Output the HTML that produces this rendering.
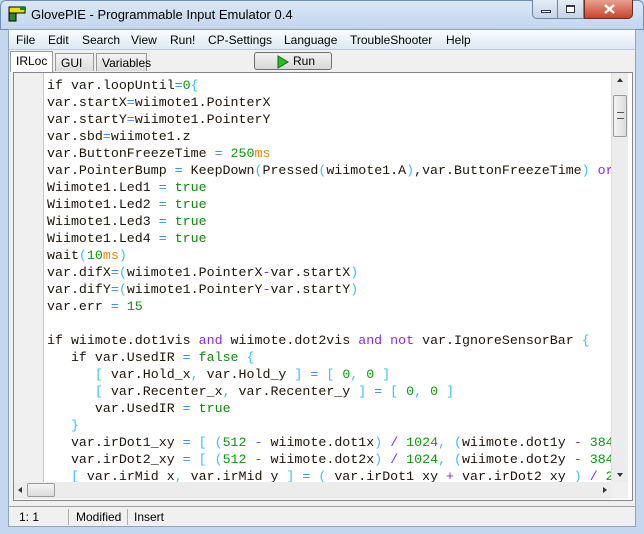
<!DOCTYPE html>
<html><head><style>
*{margin:0;padding:0;box-sizing:border-box}
body{width:644px;height:534px;overflow:hidden;background:#c4d7ee;font-family:"Liberation Sans",sans-serif;position:relative}
.abs{position:absolute}
#title{left:0;top:0;width:644px;height:30px;background:linear-gradient(#dbe8f7,#c2d6ee);border-radius:6px 6px 0 0;border:1px solid #6e8fb5}
#ttext{left:31px;top:7px;font-size:13px;color:#000}
#client{left:8px;top:29px;width:628px;height:498px;background:#f0f0f0;border:1px solid #8ea3bd}
#menu{left:9px;top:30px;width:626px;height:20px;background:linear-gradient(#fbfcfe,#dde7f4);font-size:12px;border-bottom:1px solid #b9c9de}
#menu span{position:absolute;top:3px}
.tab{position:absolute;font-size:12px;border:1px solid #999;border-bottom:none;background:linear-gradient(#f4f4f4,#dcdcdc);height:18px;top:53px;padding:2px 5px}
#editor{left:13px;top:72px;width:620px;height:429px;border:1px solid #828790;background:#fff}
#gutter{left:14px;top:73px;width:30px;height:409px;background:#f0f0f0;border-right:1px solid #c8c8c8}
#code{left:47px;top:77px;font-family:"Liberation Mono",monospace;font-size:13.3px;line-height:17px;white-space:pre;color:#1e1408;width:564px;height:405px;overflow:hidden}
.o{color:#3a8cf0}.n{color:#0a9a0a}.s{color:#f08a00}.k{color:#8a2be2}.b{color:#3cc0f0}.t{color:#0a8a0a}
#vs{left:611px;top:73px;width:17px;height:409px;background:#ececec;border-left:1px solid #e0e0e0}
#hs{left:14px;top:482px;width:597px;height:17px;background:#ececec}
#status{left:9px;top:506px;width:626px;height:20px;font-size:12px;border-top:1px solid #a0a0a0;background:#f0f0f0}
#status span{position:absolute;top:3px}
</style></head><body>
<div id="title" class="abs"></div>
<svg class="abs" style="left:8px;top:4px" width="20" height="20"><rect x="1" y="3" width="16" height="6" fill="#e8e000" stroke="#000"/><rect x="1" y="9" width="7" height="8" fill="#2a8a2a" stroke="#000"/><rect x="12" y="3" width="6" height="3" fill="#0a8a0a"/></svg>
<div id="ttext" class="abs">GlovePIE - Programmable Input Emulator 0.4</div>
<div class="abs" style="left:532px;top:0;width:26px;height:19px;border:1px solid #6d85a4;border-top:none;border-radius:0 0 0 5px;background:linear-gradient(#e4ecf6,#c4d4e8)"><div style="position:absolute;left:8px;top:10px;width:10px;height:3px;background:#fff;border:1px solid #334"></div></div>
<div class="abs" style="left:558px;top:0;width:26px;height:19px;border:1px solid #6d85a4;border-top:none;border-left:none;background:linear-gradient(#e4ecf6,#c4d4e8)"><div style="position:absolute;left:8px;top:5px;width:9px;height:8px;border:1px solid #334;border-top-width:2px;background:#fff"></div></div>
<div class="abs" style="left:584px;top:0;width:49px;height:19px;border:1px solid #6b2c24;border-top:none;border-radius:0 0 5px 0;background:linear-gradient(#e8a090,#c8442c)"><svg style="position:absolute;left:18px;top:4px" width="13" height="10"><path d="M2 1 L11 9 M11 1 L2 9" stroke="#fff" stroke-width="2.5"/></svg></div>
<div id="client" class="abs"></div>
<div id="menu" class="abs"><span style="left:7px">File</span><span style="left:39px">Edit</span><span style="left:73px">Search</span><span style="left:122px">View</span><span style="left:161px">Run!</span><span style="left:199px">CP-Settings</span><span style="left:275px">Language</span><span style="left:341px">TroubleShooter</span><span style="left:437px">Help</span></div>
<div class="tab" style="left:10px;top:51px;height:21px;background:#fff;padding-top:2px">IRLoc</div>
<div class="tab" style="left:55px;width:39px">GUI</div>
<div class="tab" style="left:96px;width:51px">Variables</div>
<div class="abs" style="left:254px;top:52px;width:78px;height:18px;border:1px solid #707070;border-radius:3px;background:linear-gradient(#f2f2f2,#d8d8d8);font-size:12px"><svg style="position:absolute;left:22px;top:2px" width="12" height="14"><path d="M1 1 L11 7 L1 13Z" fill="#22c022" stroke="#0a6a0a"/></svg><span style="position:absolute;left:38px;top:1px">Run</span></div>
<div id="editor" class="abs"></div>
<div id="gutter" class="abs"></div>
<div id="code" class="abs">if var.loopUntil<span class="o">=</span><span class="n">0</span><span class="b">{</span>
var.startX<span class="o">=</span>wiimote1.PointerX
var.startY<span class="o">=</span>wiimote1.PointerY
var.sbd<span class="o">=</span>wiimote1.z
var.ButtonFreezeTime <span class="o">=</span> <span class="n">250</span><span class="s">ms</span>
var.PointerBump <span class="o">=</span> KeepDown<span class="b">(</span>Pressed<span class="b">(</span>wiimote1.A<span class="b">)</span>,var.ButtonFreezeTime<span class="b">)</span> <span class="k">or</span>
Wiimote1.Led1 <span class="o">=</span> <span class="t">true</span>
Wiimote1.Led2 <span class="o">=</span> <span class="t">true</span>
Wiimote1.Led3 <span class="o">=</span> <span class="t">true</span>
Wiimote1.Led4 <span class="o">=</span> <span class="t">true</span>
wait<span class="b">(</span><span class="n">10</span><span class="s">ms</span><span class="b">)</span>
var.difX<span class="o">=</span><span class="b">(</span>wiimote1.PointerX<span class="k">-</span>var.startX<span class="b">)</span>
var.difY<span class="o">=</span><span class="b">(</span>wiimote1.PointerY<span class="k">-</span>var.startY<span class="b">)</span>
var.err <span class="o">=</span> <span class="n">15</span>

if wiimote.dot1vis <span class="k">and</span> wiimote.dot2vis <span class="k">and</span> <span class="k">not</span> var.IgnoreSensorBar <span class="b">{</span>
   if var.UsedIR <span class="o">=</span> <span class="t">false</span> <span class="b">{</span>
      <span class="b">[</span> var.Hold_x<span class="b">,</span> var.Hold_y <span class="b">]</span> <span class="o">=</span> <span class="b">[</span> <span class="n">0</span><span class="b">,</span> <span class="n">0</span> <span class="b">]</span>
      <span class="b">[</span> var.Recenter_x<span class="b">,</span> var.Recenter_y <span class="b">]</span> <span class="o">=</span> <span class="b">[</span> <span class="n">0</span><span class="b">,</span> <span class="n">0</span> <span class="b">]</span>
      var.UsedIR <span class="o">=</span> <span class="t">true</span>
   <span class="b">}</span>
   var.irDot1_xy <span class="o">=</span> <span class="b">[</span> <span class="b">(</span><span class="n">512</span> <span class="k">-</span> wiimote.dot1x<span class="b">)</span> <span class="k">/</span> <span class="n">1024</span><span class="b">,</span> <span class="b">(</span>wiimote.dot1y <span class="k">-</span> <span class="n">384</span>
   var.irDot2_xy <span class="o">=</span> <span class="b">[</span> <span class="b">(</span><span class="n">512</span> <span class="k">-</span> wiimote.dot2x<span class="b">)</span> <span class="k">/</span> <span class="n">1024</span><span class="b">,</span> <span class="b">(</span>wiimote.dot2y <span class="k">-</span> <span class="n">384</span>
   <span class="b">[</span> var.irMid x<span class="b">,</span> var.irMid y <span class="b">]</span> <span class="o">=</span> <span class="b">(</span> var.irDot1 xy <span class="k">+</span> var.irDot2 xy <span class="b">)</span> <span class="k">/</span> <span class="n">2</span></div>
<div id="vs" class="abs"><div style="position:absolute;left:5px;top:5px;border:3px solid transparent;border-bottom:4px solid #333;border-top:none"></div><div style="position:absolute;left:1px;top:22px;width:14px;height:42px;border:1px solid #9a9a9a;border-radius:2px;background:linear-gradient(90deg,#f4f4f4,#dcdcdc)"><div style="position:absolute;left:3px;top:16px;width:7px;height:7px;border-top:1px solid #555;border-bottom:1px solid #555"></div></div><div style="position:absolute;left:5px;top:400px;border:3px solid transparent;border-top:4px solid #333;border-bottom:none"></div></div>
<div id="hs" class="abs"><div style="position:absolute;left:4px;top:5px;border:3px solid transparent;border-right:4px solid #333;border-left:none"></div><div style="position:absolute;left:13px;top:1px;width:28px;height:14px;border:1px solid #9a9a9a;border-radius:2px;background:linear-gradient(#f4f4f4,#dcdcdc)"></div><div style="position:absolute;left:589px;top:5px;border:3px solid transparent;border-left:4px solid #333;border-right:none"></div></div>
<div class="abs" style="left:611px;top:482px;width:17px;height:17px;background:#f0f0f0"></div>
<div id="status" class="abs"><span style="left:10px">1: 1</span><div style="position:absolute;left:59px;top:2px;height:16px;border-left:1px solid #b0b0b0"></div><span style="left:67px">Modified</span><div style="position:absolute;left:118px;top:2px;height:16px;border-left:1px solid #b0b0b0"></div><span style="left:125px">Insert</span></div>
</body></html>
